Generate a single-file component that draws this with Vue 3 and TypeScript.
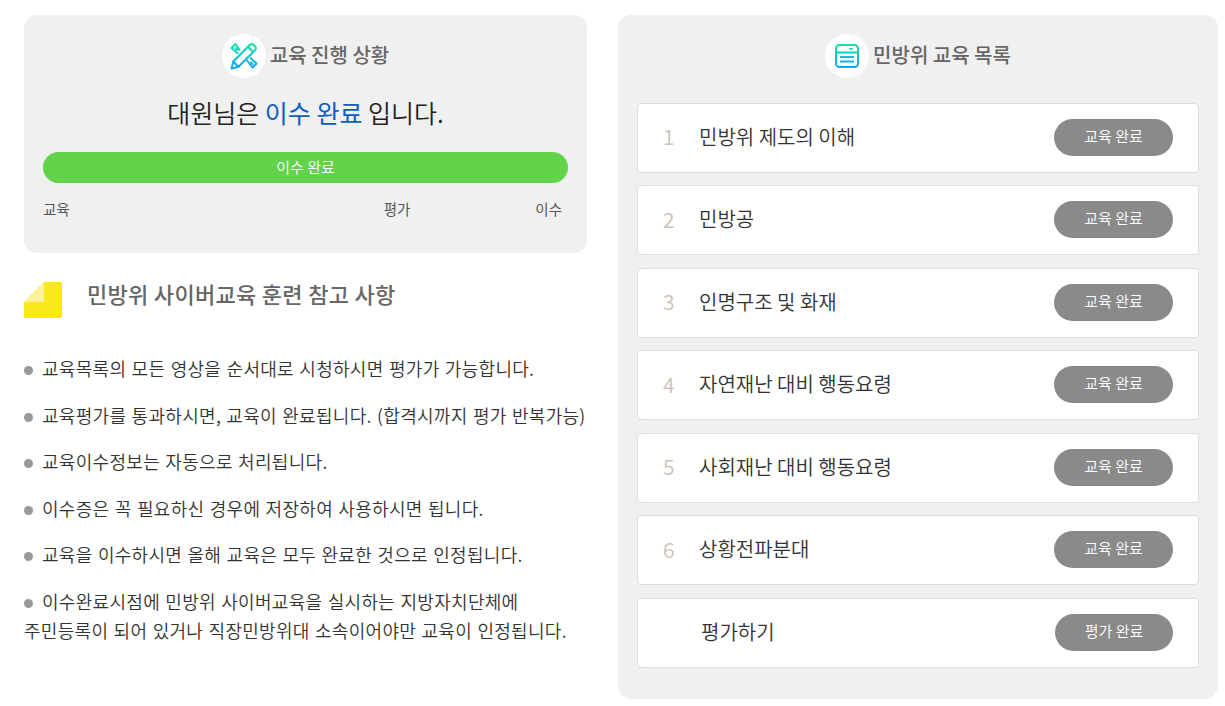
<script setup lang="ts">
interface Lesson {
  no: string
  title: string
  status: string
}

const lessons: Lesson[] = [
  { no: '1', title: '민방위 제도의 이해', status: '교육 완료' },
  { no: '2', title: '민방공', status: '교육 완료' },
  { no: '3', title: '인명구조 및 화재', status: '교육 완료' },
  { no: '4', title: '자연재난 대비 행동요령', status: '교육 완료' },
  { no: '5', title: '사회재난 대비 행동요령', status: '교육 완료' },
  { no: '6', title: '상황전파분대', status: '교육 완료' },
]

const notes = [
  '교육목록의 모든 영상을 순서대로 시청하시면 평가가 가능합니다.',
  '교육평가를 통과하시면, 교육이 완료됩니다. (합격시까지 평가 반복가능)',
  '교육이수정보는 자동으로 처리됩니다.',
  '이수증은 꼭 필요하신 경우에 저장하여 사용하시면 됩니다.',
  '교육을 이수하시면 올해 교육은 모두 완료한 것으로 인정됩니다.',
]
</script>

<template>
  <div class="page">
    <div class="left">
      <section class="progress">
        <div class="head">
          <span class="badge">
            <svg width="28" height="28" viewBox="0 0 28 28" fill="none" stroke="url(#g1)" stroke-width="2" stroke-linejoin="round" stroke-linecap="round">
              <defs>
                <linearGradient id="g1" gradientUnits="userSpaceOnUse" x1="0" y1="1" x2="0" y2="27">
                  <stop offset="0" stop-color="#0fe69a" />
                  <stop offset="1" stop-color="#12a2f8" />
                </linearGradient>
              </defs>
              <path d="M1.5 26.5l1.8-7L20 2.8a2.4 2.4 0 0 1 3.4 0l1.8 1.8a2.4 2.4 0 0 1 0 3.4L8.5 24.7z" />
              <path d="M3.3 19.5l5.2 5.2M18 4.8l5.2 5.2" />
              <path d="M9.5 8L5.5 2 1.5 6l6 5M17 18.5l5.5 7 4-4-6-5.5" />
              <path d="M5.8 6.2l1.5 1.5M21 20.5l1.5 1.5" />
            </svg>
          </span>
          <h2>교육 진행 상황</h2>
        </div>
        <p class="state">대원님은 <b>이수 완료</b> 입니다.</p>
        <div class="bar">이수 완료</div>
        <div class="steps">
          <span class="first">교육</span>
          <span class="mid">평가</span>
          <span>이수</span>
        </div>
      </section>

      <div class="notice-head">
        <span class="memo"><i></i></span>
        <h3>민방위 사이버교육 훈련 참고 사항</h3>
      </div>
      <ul class="notes">
        <li v-for="n in notes" :key="n"><i class="dot"></i>{{ n }}</li>
        <li><i class="dot"></i>이수완료시점에 민방위 사이버교육을 실시하는 지방자치단체에<br />주민등록이 되어 있거나 직장민방위대 소속이어야만 교육이 인정됩니다.</li>
      </ul>
    </div>

    <section class="course">
      <div class="head">
        <span class="badge">
          <svg width="26" height="26" viewBox="0 0 26 26" fill="none">
            <defs>
              <linearGradient id="g2" gradientUnits="userSpaceOnUse" x1="0" y1="1" x2="0" y2="25">
                <stop offset="0" stop-color="#0fe69a" />
                <stop offset="1" stop-color="#12a2f8" />
              </linearGradient>
            </defs>
            <rect x="2" y="2" width="22" height="22" rx="3.5" stroke="url(#g2)" stroke-width="2" />
            <path d="M2 9.5h22" stroke="url(#g2)" stroke-width="2" />
            <path d="M14.5 5h5l-2.5 2.6z" fill="#10dcae" />
            <path d="M6 14h14M6 18.5h14" stroke="url(#g2)" stroke-width="2" />
          </svg>
        </span>
        <h2>민방위 교육 목록</h2>
      </div>
      <div class="list">
        <div v-for="l in lessons" :key="l.no" class="row">
          <span class="no">{{ l.no }}</span>
          <span class="title">{{ l.title }}</span>
          <span class="pill">{{ l.status }}</span>
        </div>
        <div class="row">
          <span class="no"></span>
          <span class="title exam">평가하기</span>
          <span class="pill exam-pill">평가 완료</span>
        </div>
      </div>
    </section>
  </div>
</template>

<style>
body { background: #fff; }
</style>

<style scoped>
.page {
  display: flex;
  align-items: flex-start;
  gap: 31px;
  padding: 15px 0 0 24px;
  width: 1225px;
  height: 706px;
  box-sizing: border-box;
  overflow: hidden;
  font-family: "Noto Sans CJK KR", "Noto Sans", sans-serif;
  font-weight: 350;
  color: #333;
}
.left { width: 563px; flex-shrink: 0; }
.progress {
  background: #f0f0f0;
  border-radius: 13px;
  height: 238px;
  padding: 0 19px;
  box-sizing: border-box;
}
.head {
  display: flex;
  align-items: center;
  justify-content: center;
  gap: 4px;
  padding-top: 19px;
  height: 63px;
  box-sizing: border-box;
}
.badge {
  width: 44px;
  height: 44px;
  border-radius: 50%;
  background: #fff;
  display: flex;
  align-items: center;
  justify-content: center;
}
h2 {
  margin: 0 0 3px;
  font-size: 20px;
  font-weight: 500;
  color: #666;
}
.state {
  margin: 16px 0 0;
  text-align: center;
  font-size: 25px;
  line-height: 36px;
  color: #222;
}
.state b { font-weight: 400; color: #0b5dc0; }
.bar {
  margin-top: 22px;
  height: 31px;
  line-height: 29px;
  border-radius: 16px;
  background: #62d34b;
  color: #fff;
  text-align: center;
  font-size: 15px;
}
.steps {
  display: flex;
  margin-top: 16px;
  padding-right: 6px;
  font-size: 14.5px;
  font-weight: 400;
  line-height: 20px;
  color: #555;
}
.steps .first { margin-right: auto; }
.steps .mid { margin-right: 125px; }
.notice-head {
  display: flex;
  align-items: center;
  margin-top: 24px;
  gap: 25px;
}
.memo {
  width: 38px;
  height: 36px;
  background: #fbe81c;
  position: relative;
  display: block;
  clip-path: polygon(20px 0, 100% 0, 100% 100%, 0 100%, 0 20px);
}
.memo i {
  position: absolute;
  left: 0;
  top: 0;
  width: 20px;
  height: 20px;
  background: #fdf29a;
}
h3 {
  margin: 0 0 14px;
  font-size: 22px;
  font-weight: 500;
  color: #666;
  letter-spacing: 0.3px;
}
.notes {
  list-style: none;
  margin: 31px 0 0;
  padding: 0;
  font-size: 18px;
  color: #333;
  letter-spacing: 0.3px;
  word-spacing: 1px;
}
.notes li {
  line-height: 29px;
  margin-bottom: 17.6px;
  white-space: nowrap;
}
.dot {
  display: inline-block;
  width: 9px;
  height: 9px;
  border-radius: 50%;
  background: #999;
  margin-right: 9px;
  vertical-align: 1px;
}
.course {
  width: 600px;
  height: 684px;
  flex-shrink: 0;
  background: #f0f0f0;
  border-radius: 13px;
  padding: 0 19px;
  box-sizing: border-box;
}
.list {
  margin-top: 24.9px;
  display: flex;
  flex-direction: column;
  gap: 12.5px;
}
.row {
  height: 70px;
  background: #fff;
  border: 1px solid #ddd;
  border-radius: 4px;
  display: flex;
  align-items: center;
  box-sizing: border-box;
  padding: 0 25px;
}
.no {
  width: 36px;
  font-size: 21px;
  color: #c8c4bc;
  padding-bottom: 3px;
}
.title {
  flex: 1;
  font-size: 20px;
  color: #333;
  padding-bottom: 3px;
}
.exam { padding-left: 2px; }
.pill {
  width: 119px;
  height: 37px;
  line-height: 34px;
  border-radius: 19px;
  background: #8a8a8a;
  color: #fff;
  font-size: 15px;
  text-align: center;
  margin-bottom: 1px;
}
.exam-pill { width: 118px; }
</style>
